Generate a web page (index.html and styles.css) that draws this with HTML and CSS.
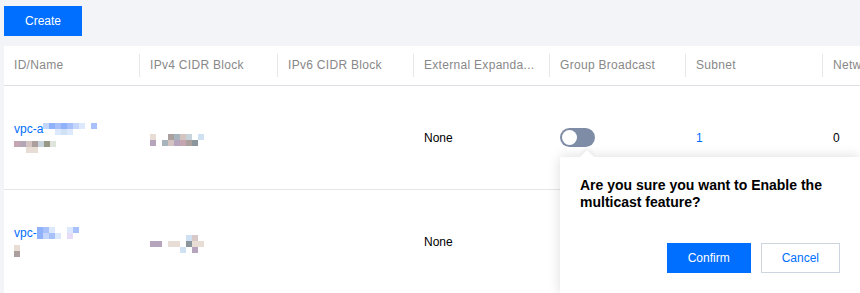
FILE: index.html
```html
<!DOCTYPE html>
<html lang="en">
<head>
    <meta charset="UTF-8">
    <meta name="viewport" content="width=device-width, initial-scale=1.0">
    <title>VPC List</title>
    <link rel="stylesheet" href="styles.css">
</head>
<body>

    <div class="toolbar">
        <button class="btn btn-primary">Create</button>
    </div>

    <div class="card">
        <table class="grid">
            <colgroup>
                <col class="w135"><col class="w138"><col class="w136"><col class="w136"><col class="w136"><col class="w137"><col class="w150">
            </colgroup>
            <thead>
                <tr>
                    <th><div class="th-cell">ID/Name</div></th>
                    <th><div class="th-cell">IPv4 CIDR Block</div></th>
                    <th><div class="th-cell">IPv6 CIDR Block</div></th>
                    <th><div class="th-cell">External Expanda...</div></th>
                    <th><div class="th-cell">Group Broadcast</div></th>
                    <th><div class="th-cell">Subnet</div></th>
                    <th><div class="th-cell">Network ACL</div></th>
                </tr>
            </thead>
            <tbody>
                <tr>
                    <td>
                        <div class="line"><a class="link">vpc-a</a><span class="mosaic m9">
                            <i class="b3"></i><i class="b1"></i><i class="b2"></i><i class="b1"></i><i class="b2"></i><i class="b3"></i><i class="b4"></i><i class="w"></i><i class="b2"></i>
                            <i class="w"></i><i class="w"></i><i class="b4"></i><i class="b5"></i><i class="b4"></i><i class="w"></i><i class="w"></i><i class="w"></i><i class="w"></i>
                        </span></div>
                        <div class="line"><span class="mosaic m7">
                            <i class="g1"></i><i class="g2"></i><i class="g5"></i><i class="g3"></i><i class="g4"></i><i class="g6"></i><i class="g7"></i>
                            <i class="w"></i><i class="w"></i><i class="g8"></i><i class="g8"></i><i class="w"></i><i class="w"></i><i class="w"></i>
                        </span></div>
                    </td>
                    <td><span class="mosaic m9">
                        <i class="g8"></i><i class="w"></i><i class="w"></i><i class="g3"></i><i class="g9"></i><i class="g5"></i><i class="g4"></i><i class="w"></i><i class="b5"></i>
                        <i class="g10"></i><i class="w"></i><i class="g9"></i><i class="g5"></i><i class="g10"></i><i class="g1"></i><i class="g3"></i><i class="g11"></i><i class="w"></i>
                    </span></td>
                    <td></td>
                    <td>None</td>
                    <td>
                        <div class="switch-wrap">
                            <span class="switch"><span class="knob"></span></span>
                            <div class="popover">
                                <div class="popover-title">Are you sure you want to Enable the multicast feature?</div>
                                <div class="popover-actions">
                                    <button class="btn btn-primary">Confirm</button>
                                    <button class="btn btn-weak">Cancel</button>
                                </div>
                            </div>
                        </div>
                    </td>
                    <td><a class="link">1</a></td>
                    <td>0</td>
                </tr>
                <tr>
                    <td>
                        <div class="line"><a class="link">vpc-</a><span class="mosaic m8">
                            <i class="b1"></i><i class="b2"></i><i class="b4"></i><i class="w"></i><i class="w"></i><i class="b4"></i><i class="b2"></i><i class="w"></i>
                            <i class="b1"></i><i class="b3"></i><i class="b2"></i><i class="b4"></i><i class="w"></i><i class="p1"></i><i class="w"></i><i class="w"></i>
                        </span></div>
                        <div class="line"><span class="mosaic m1">
                            <i class="g8"></i><i class="g3"></i>
                        </span></div>
                    </td>
                    <td><span class="mosaic m9">
                        <i class="w"></i><i class="w"></i><i class="w"></i><i class="w"></i><i class="w"></i><i class="w"></i><i class="b5"></i><i class="g12"></i><i class="w"></i>
                        <i class="g10"></i><i class="g10"></i><i class="w"></i><i class="g8"></i><i class="g8"></i><i class="w"></i><i class="g11"></i><i class="g8"></i><i class="g8"></i>
                        <i class="w"></i><i class="w"></i><i class="w"></i><i class="w"></i><i class="w"></i><i class="b5"></i><i class="w"></i><i class="g10"></i><i class="w"></i>
                    </span></td>
                    <td></td>
                    <td>None</td>
                    <td></td>
                    <td><a class="link">1</a></td>
                    <td>0</td>
                </tr>
            </tbody>
        </table>
    </div>

</body>
</html>
```

FILE: styles.css
```css
body {
    margin: 0;
    background-color: #f3f4f7;
    font-family: "Liberation Sans", Arial, sans-serif;
    font-size: 12px;
    color: #000;
    overflow: hidden;
    height: 293px;
}
.toolbar {
    padding: 6px 4px 10px;
}
.btn {
    height: 30px;
    padding: 0 20px;
    border: 1px solid transparent;
    font-family: inherit;
    font-size: 12px;
    line-height: 28px;
    cursor: pointer;
    background: #fff;
}
.btn-primary {
    background-color: #006eff;
    border-color: #006eff;
    color: #fff;
}
.btn-weak {
    border-color: #cfd5de;
    color: #006eff;
}
.card {
    margin-left: 4px;
    background: #fff;
    width: 1000px;
}
.grid {
    border-collapse: collapse;
    table-layout: fixed;
    width: 1000px;
}
.w135 { width: 135px; }
.w138 { width: 138px; }
.w136 { width: 136px; }
.w137 { width: 137px; }
.w150 { width: 182px; }
.grid th {
    padding: 8px 0;
    border-bottom: 1px solid #dcdfe5;
    font-weight: normal;
    color: #888;
    text-align: left;
    white-space: nowrap;
    letter-spacing: 0.3px;
}
.th-cell {
    line-height: 23px;
    padding-left: 10px;
    border-left: 1px solid #e5e7ea;
}
.grid th:first-child .th-cell {
    border-left: none;
}
.grid td {
    height: 103px;
    padding: 0 0 0 11px;
    border-bottom: 1px solid #e6e6e6;
    vertical-align: middle;
    white-space: nowrap;
}
.grid td:first-child {
    padding-left: 10px;
}
.line {
    height: 18px;
    display: flex;
    align-items: center;
}
.link {
    color: #006eff;
}
.mosaic {
    display: inline-grid;
    grid-auto-rows: 6px;
}
.m9 { grid-template-columns: repeat(9, 6px); }
.m8 { grid-template-columns: repeat(8, 6px); }
.m7 { grid-template-columns: repeat(7, 6px); }
.m1 { grid-template-columns: 6px; }
.mosaic i { display: block; }
.w { background: transparent; }
.b1 { background: #8fb2fb; }
.b2 { background: #a9c1fb; }
.b3 { background: #c4d6fb; }
.b4 { background: #dce8fb; }
.b5 { background: #cfe1f2; }
.p1 { background: #e6dcf8; }
.g1 { background: #c3a6b2; }
.g2 { background: #b3a6b6; }
.g3 { background: #aca09f; }
.g4 { background: #c7d3db; }
.g5 { background: #d3c4c2; }
.g6 { background: #989884; }
.g7 { background: #dfe4dc; }
.g8 { background: #e8ddd4; }
.g9 { background: #a8b4bb; }
.g10 { background: #b6a4bd; }
.g11 { background: #8a959c; }
.g12 { background: #d8c8c8; }
.switch-wrap {
    position: relative;
    display: inline-block;
    vertical-align: middle;
}
.switch {
    display: block;
    position: relative;
    width: 35px;
    height: 19px;
    border-radius: 10px;
    background-color: #7f8ca5;
}
.knob {
    position: absolute;
    top: 2px;
    left: 2px;
    width: 15px;
    height: 15px;
    border-radius: 50%;
    background: #fff;
}
.popover {
    position: absolute;
    top: 29px;
    left: 0;
    z-index: 10;
    width: 260px;
    padding: 20px;
    background: #fff;
    box-shadow: 0 0 12px rgba(0, 0, 0, 0.14);
    white-space: normal;
}
.popover::before {
    content: "";
    position: absolute;
    top: -5px;
    left: 22px;
    width: 10px;
    height: 10px;
    background: #fff;
    transform: rotate(45deg);
    box-shadow: -2px -2px 4px rgba(0, 0, 0, 0.05);
}
.popover-title {
    font-size: 14px;
    font-weight: bold;
    line-height: 17px;
    color: #000;
}
.popover-actions {
    display: flex;
    justify-content: flex-end;
    gap: 10px;
    margin-top: 32px;
}
```
